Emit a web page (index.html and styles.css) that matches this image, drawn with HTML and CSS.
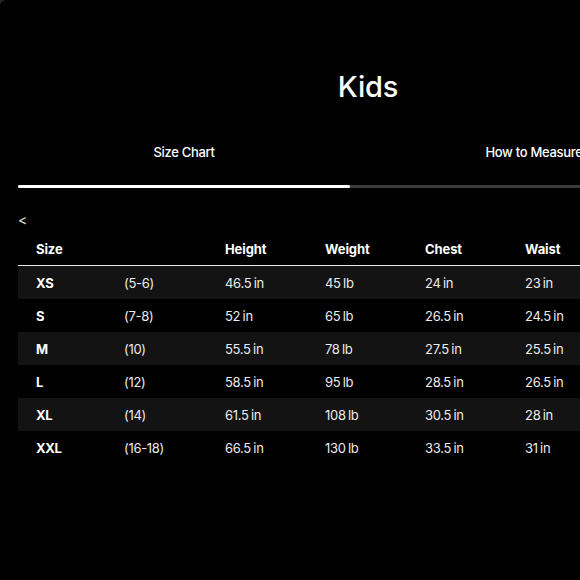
FILE: index.html
```html
<!DOCTYPE html>
<html lang="en">
<head>
<meta charset="utf-8">
<title>Kids Size Chart</title>
<link rel="stylesheet" href="styles.css">
</head>
<body>
<div class="modal">
  <div class="content">
    <h1 class="title">Kids</h1>
    <div class="tabs">
      <div class="tab tab-first">Size Chart</div>
      <div class="tab tab-second">How to Measure</div>
    </div>
    <div class="progress">
      <div class="progress-fill"></div>
    </div>
    <div class="back">&lt;</div>
    <div class="table">
      <div class="row head">
        <div class="cell">Size</div>
        <div class="cell"></div>
        <div class="cell">Height</div>
        <div class="cell">Weight</div>
        <div class="cell">Chest</div>
        <div class="cell">Waist</div>
      </div>
      <div class="row alt">
        <div class="cell size">XS</div><div class="cell">(5-6)</div><div class="cell">46.5 in</div><div class="cell">45 lb</div><div class="cell">24 in</div><div class="cell">23 in</div>
      </div>
      <div class="row">
        <div class="cell size">S</div><div class="cell">(7-8)</div><div class="cell">52 in</div><div class="cell">65 lb</div><div class="cell">26.5 in</div><div class="cell">24.5 in</div>
      </div>
      <div class="row alt">
        <div class="cell size">M</div><div class="cell">(10)</div><div class="cell">55.5 in</div><div class="cell">78 lb</div><div class="cell">27.5 in</div><div class="cell">25.5 in</div>
      </div>
      <div class="row">
        <div class="cell size">L</div><div class="cell">(12)</div><div class="cell">58.5 in</div><div class="cell">95 lb</div><div class="cell">28.5 in</div><div class="cell">26.5 in</div>
      </div>
      <div class="row alt">
        <div class="cell size">XL</div><div class="cell">(14)</div><div class="cell">61.5 in</div><div class="cell">108 lb</div><div class="cell">30.5 in</div><div class="cell">28 in</div>
      </div>
      <div class="row">
        <div class="cell size">XXL</div><div class="cell">(16-18)</div><div class="cell">66.5 in</div><div class="cell">130 lb</div><div class="cell">33.5 in</div><div class="cell">31 in</div>
      </div>
    </div>
  </div>
</div>
</body>
</html>
```
FILE: styles.css
```css
html, body {
  margin: 0;
  padding: 0;
  width: 580px;
  height: 580px;
  overflow: hidden;
  background: #262626;
}

.modal {
  width: 800px;
  height: 580px;
  background: #000;
  border-top-left-radius: 6px;
  color: #fff;
  font-family: Inter, "Liberation Sans", Arial, sans-serif;
  letter-spacing: -0.3px;
}

.content {
  width: 700px;
  padding-left: 18px;
}

.title {
  margin: 0;
  padding-top: 69px;
  height: 36px;
  line-height: 36px;
  font-size: 29px;
  font-weight: 500;
  text-align: center;
  letter-spacing: -0.2px;
}

.tabs {
  display: flex;
  margin-top: 37px;
  height: 20px;
  line-height: 20px;
  font-size: 13px;
  font-weight: 500;
}

.tab {
  text-align: center;
}

.tab-first {
  width: 332px;
}

.tab-second {
  width: 368px;
}

.progress {
  margin-top: 23px;
  height: 3px;
  background: #3c3c3c;
  border-radius: 2px;
  width: 760px;
}

.progress-fill {
  width: 332px;
  height: 3px;
  background: #fff;
  border-radius: 2px;
}

.back {
  margin-top: 24px;
  height: 16px;
  line-height: 16px;
  font-size: 14px;
  color: #ddd;
}

.table {
  margin-top: 4px;
  width: 760px;
  font-size: 13px;
}

.row {
  display: grid;
  grid-template-columns: 88px 101px 100px 100px 100px 100px 1fr;
  height: 33px;
  align-items: center;
}

.row.head {
  height: 33px;
  font-weight: 700;
  border-bottom: 1px solid #e6e6e6;
  letter-spacing: -0.1px;
}

.row.alt {
  background: #131313;
}

.cell {
  padding-left: 18px;
  white-space: nowrap;
  color: #ececec;
  word-spacing: -1px;
}

.head .cell,
.cell.size {
  color: #fff;
  font-weight: 700;
}
```
